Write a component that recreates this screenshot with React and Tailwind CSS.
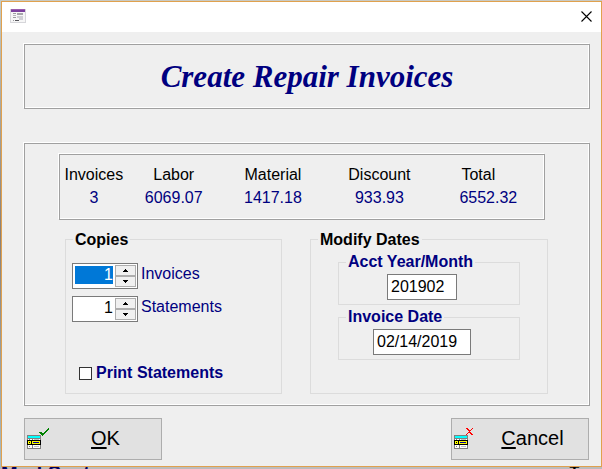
import React, { useState } from 'react';

const TOTALS = [
  { label: 'Invoices', value: '3', width: 'w-[14%]', head: '' },
  { label: 'Labor', value: '6069.07', width: 'w-[19%]', head: '' },
  { label: 'Material', value: '1417.18', width: 'w-[22%]', head: '' },
  { label: 'Discount', value: '933.93', width: 'w-[22%]', head: '' },
  { label: 'Total', value: '6552.32', width: 'w-[23%]', head: 'pr-5' },
];

const PANEL =
  'border border-[#a0a0a0] shadow-[-1px_-1px_0_#fff,inset_-1px_-1px_0_#fff]';

function FormIcon() {
  return (
    <svg width="16" height="14" viewBox="0 0 16 14" shapeRendering="crispEdges" aria-hidden="true">
      <rect x="0" y="0" width="16" height="14" fill="#d6d6da" />
      <rect x="1" y="3" width="14" height="10" fill="#f6f6f6" />
      <rect x="1" y="0" width="14" height="1" fill="#9a5cae" />
      <rect x="1" y="1" width="14" height="2" fill="#7b3f9d" />
      <rect x="3" y="4" width="3" height="1" fill="#9b9ba0" />
      <rect x="3" y="6" width="3" height="1" fill="#b5b5ba" />
      <rect x="3" y="8" width="3" height="1" fill="#9b9ba0" />
      <rect x="7" y="4" width="6" height="2" fill="#a5a5aa" />
      <rect x="7" y="7" width="6" height="2" fill="#cfcfd4" />
      <rect x="9" y="9" width="4" height="2" fill="#cfcfd4" />
      <rect x="5" y="11" width="4" height="1" fill="#55555a" />
      <rect x="3" y="11" width="1" height="1" fill="#9b9ba0" />
    </svg>
  );
}

function RecordIcon({ children }) {
  return (
    <svg
      className="shrink-0"
      width="23"
      height="21"
      viewBox="0 0 23 21"
      shapeRendering="crispEdges"
      aria-hidden="true"
    >
      <rect x="0" y="7" width="14" height="14" fill="#808080" />
      <rect x="1" y="8" width="12" height="2" fill="#00ffff" />
      <rect x="1" y="11" width="4" height="9" fill="#fff" />
      <rect x="6" y="11" width="7" height="9" fill="#fff" />
      <rect x="2" y="11" width="1" height="1" fill="#808080" />
      <rect x="7" y="11" width="5" height="1" fill="#c0c0c0" />
      <rect x="2" y="18" width="1" height="1" fill="#808080" />
      <rect x="7" y="18" width="5" height="1" fill="#c0c0c0" />
      <rect x="0" y="12" width="14" height="5" fill="#000" />
      <rect x="1" y="13" width="3" height="3" fill="#ffff00" />
      <rect x="5" y="13" width="8" height="3" fill="#ffff00" />
      <rect x="2" y="14" width="1" height="1" fill="#000" />
      <rect x="6" y="14" width="6" height="1" fill="#0000a0" />
      {children}
    </svg>
  );
}

function OkIcon() {
  return (
    <RecordIcon>
      <path
        fill="#008000"
        d="M21 0h1v1h-1zM20 1h2v1h-2zM19 2h2v1h-2zM18 3h2v1h-2zM12 4h3v1h-3zM17 4h2v1h-2zM13 5h5v1h-5zM14 6h3v1h-3zM15 7h1v1h-1z"
      />
    </RecordIcon>
  );
}

function CancelIcon() {
  return (
    <RecordIcon>
      <path
        fill="#ff0000"
        d="M12 0h2v1h-2zM18 0h1v1h-1zM13 1h2v1h-2zM17 1h1v1h-1zM14 2h3v1h-3zM15 3h1v1h-1zM14 4h3v1h-3zM13 5h1v1h-1zM16 5h2v1h-2zM12 6h1v1h-1zM17 6h2v1h-2z"
      />
    </RecordIcon>
  );
}

function StepButton({ label, down, onClick }) {
  return (
    <button
      type="button"
      aria-label={label}
      onClick={onClick}
      className="flex flex-1 items-center justify-center border border-[#adadad] bg-[#f0f0f0]"
    >
      <svg width="5" height="3" viewBox="0 0 5 3" shapeRendering="crispEdges" aria-hidden="true">
        <path d={down ? 'M0 0h5v1h-5zM1 1h3v1h-3zM2 2h1v1h-1z' : 'M2 0h1v1h-1zM1 1h3v1h-3zM0 2h5v1h-5z'} />
      </svg>
    </button>
  );
}

function Spinner({ id, label, selected }) {
  const [value, setValue] = useState(1);

  return (
    <div className="flex items-center gap-[3px]">
      <div className="flex h-[26px] w-[66px] border border-[#7a7a7a] bg-white p-px">
        <input
          id={id}
          inputMode="numeric"
          value={value}
          onChange={(e) => setValue(Number(e.target.value) || 0)}
          className={`m-px mb-[3px] min-w-0 flex-1 text-right outline-none ${
            selected ? 'bg-[#0078d7] text-white' : 'bg-white text-black'
          }`}
        />
        <div className="ml-px flex w-[21px] flex-col">
          <StepButton label={`More ${label}`} onClick={() => setValue(value + 1)} />
          <StepButton label={`Fewer ${label}`} down onClick={() => setValue(Math.max(0, value - 1))} />
        </div>
      </div>
      <label htmlFor={id} className="pb-1 leading-5 text-[#000080]">
        {label}
      </label>
    </div>
  );
}

function DateField({ id, label, initial, width }) {
  const [value, setValue] = useState(initial);

  return (
    <fieldset className="border border-[#dcdcdc] pr-[14px] pb-1">
      <legend className="ml-[7px] h-6 px-0.5 leading-6 font-bold text-[#000080]">
        <label htmlFor={id}>{label}</label>
      </legend>
      <input
        id={id}
        value={value}
        onChange={(e) => setValue(e.target.value)}
        className={`mx-auto block h-[26px] border border-[#7a7a7a] bg-white px-[3px] text-black outline-none ${width}`}
      />
    </fieldset>
  );
}

function ActionButton({ icon, children }) {
  return (
    <button
      type="button"
      className="flex h-[42px] w-[138px] items-center border border-[#adadad] bg-[#e1e1e1] pb-0.5 pl-0.5 text-xl"
    >
      {icon}
      <span className="flex-1 text-center">{children}</span>
    </button>
  );
}

export default function App() {
  const [printStatements, setPrintStatements] = useState(false);

  return (
    <div className="flex min-h-screen flex-col bg-linear-to-b from-[#c3cbc8] via-[#8a8078] to-[#a9bcc4] pl-px font-['Liberation_Sans',Arial,sans-serif] text-base text-black">
      <div className="h-px bg-[#c8cac4]" />
      <main className="flex flex-1 flex-col border border-[#e0a14e] bg-[#efefef]">
        <header className="flex h-[30px] items-center justify-between bg-white pr-[7px] pb-0.5 pl-2">
          <FormIcon />
          <button type="button" aria-label="Close" className="p-0.5">
            <svg width="11" height="11" viewBox="0 0 11 11" aria-hidden="true">
              <path d="M0.5 0.5l10 10M10.5 0.5l-10 10" stroke="#000" strokeWidth="1.1" fill="none" />
            </svg>
          </button>
        </header>

        <form className="pt-3 pr-[11px] pb-1.5 pl-[22px]" onSubmit={(e) => e.preventDefault()}>
          <div className={`${PANEL} flex h-[65px] items-center justify-center`}>
            <h1 className="font-['Brush_Script_MT','Liberation_Serif',serif] text-[31px] leading-10 font-bold text-[#000080] italic">
              Create Repair Invoices
            </h1>
          </div>

          <section className={`${PANEL} mt-[34px] pt-2.5 pb-[11px]`}>
            <div className={`${PANEL} mr-[44px] ml-[34px] pt-2 pb-2.5`}>
              <table className="w-full table-fixed text-center">
                <thead>
                  <tr className="h-[23px]">
                    {TOTALS.map((t) => (
                      <th key={t.label} scope="col" className={`leading-[23px] font-normal ${t.width} ${t.head}`}>
                        {t.label}
                      </th>
                    ))}
                  </tr>
                </thead>
                <tbody>
                  <tr className="h-[23px] text-[#000080]">
                    {TOTALS.map((t) => (
                      <td key={t.label} className="leading-[23px]">
                        {t.value}
                      </td>
                    ))}
                  </tr>
                </tbody>
              </table>
            </div>

            <div className="mt-[7px] mr-[41px] ml-10 grid grid-cols-[217fr_238fr] gap-7">
              <fieldset className="border border-[#dcdcdc] px-1.5 pb-2">
                <legend className="ml-px h-6 px-0.5 leading-[26px] font-bold">Copies</legend>
                <div className="flex flex-col gap-[7px] pt-3">
                  <Spinner id="invoice-copies" label="Invoices" selected />
                  <Spinner id="statement-copies" label="Statements" />
                </div>
                <label className="mt-[39px] ml-[7px] flex items-center gap-1 font-bold text-[#000080]">
                  <input
                    type="checkbox"
                    checked={printStatements}
                    onChange={(e) => setPrintStatements(e.target.checked)}
                    className="size-[13px] appearance-none border border-[#333] bg-white checked:bg-[#000080]"
                  />
                  Print Statements
                </label>
              </fieldset>

              <fieldset className="border border-[#dcdcdc] px-[27px]">
                <legend className="-ml-5 h-6 px-0.5 leading-[26px] font-bold">Modify Dates</legend>
                <div className="-mt-px flex flex-col">
                  <DateField id="acct-month" label="Acct Year/Month" initial="201902" width="w-[70px]" />
                  <DateField id="invoice-date" label="Invoice Date" initial="02/14/2019" width="w-[98px]" />
                </div>
              </fieldset>
            </div>
          </section>

          <div className="mt-3 mr-px flex justify-between">
            <ActionButton icon={<OkIcon />}>
              <u className="underline-offset-2">O</u>K
            </ActionButton>
            <ActionButton icon={<CancelIcon />}>
              <u className="underline-offset-2">C</u>ancel
            </ActionButton>
          </div>
        </form>
      </main>
      {/* sliver of the window underneath */}
      <div
        aria-hidden="true"
        className="flex h-0.5 justify-between overflow-hidden bg-[#bcbcbc] text-xl leading-3 font-bold text-[#000060]"
      >
        <span>Mod System</span>
        <span className="text-base leading-3 text-black">Tom</span>
      </div>
    </div>
  );
}
